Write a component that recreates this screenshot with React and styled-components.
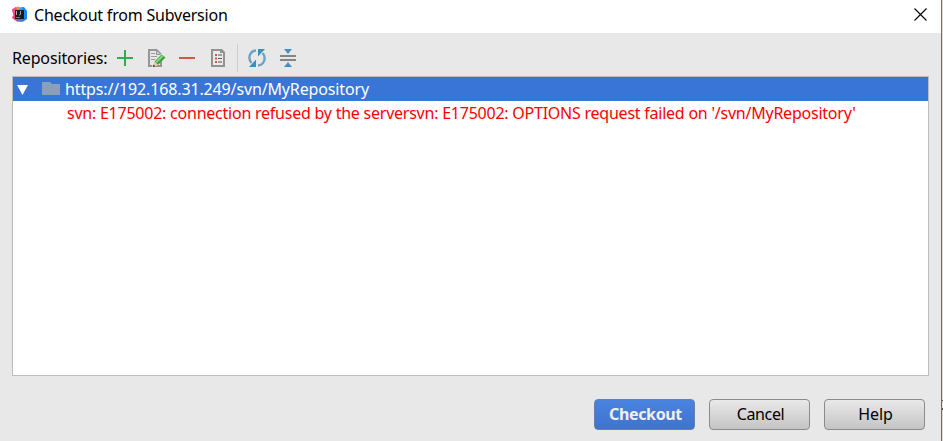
import React from "react";
import styled, { createGlobalStyle } from "styled-components";

const GlobalStyle = createGlobalStyle`
  * { box-sizing: border-box; }
  body {
    margin: 0;
    overflow: hidden;
    font-family: "Noto Sans", "Open Sans", sans-serif;
    font-size: 16px;
    color: #000;
  }
`;

const Screen = styled.div`
  display: flex;
  width: 943px;
  height: 441px;
`;

const Dialog = styled.main`
  display: flex;
  flex-direction: column;
  width: 942px;
  height: 441px;
  border-right: 1px solid #1883d7;
  background: #e8e8e8;
`;

const Backdrop = styled.aside`
  width: 1px;
  padding-top: 400px;
  background: #dcdcdc;
`;

const BackdropMark = styled.div`
  height: 10px;
  border: solid #555;
  border-width: 1px 0 2px;
`;

const TitleBar = styled.header`
  display: flex;
  align-items: center;
  height: 33px;
  padding: 0 14px 4px 11px;
  background: #fff;
`;

const Label = styled.span`
  display: block;
  flex: none;
  white-space: pre;
  line-height: 22px;
  letter-spacing: ${(p) => p.$track || 0}px;
`;

const Title = styled(Label)`
  margin-left: 6px;
  flex: 1;
`;

const CloseButton = styled.button`
  display: flex;
  padding: 0;
  border: 0;
  background: none;
`;

const Toolbar = styled.div`
  display: flex;
  align-items: center;
  height: 43px;
  padding: 7px 12px 0;
`;

const ToolbarLabel = styled(Label)`
  width: 103px;
`;

const ToolButton = styled.button`
  display: flex;
  flex: none;
  width: 20px;
  height: 20px;
  padding: 0;
  margin-right: ${(p) => p.$gap || 0}px;
  border: 0;
  background: none;
`;

const Separator = styled.div`
  width: 1px;
  height: 28px;
  margin-right: 9px;
  background: #cdcdcd;
`;

const Tree = styled.section`
  width: 917px;
  height: 300px;
  margin-left: 12px;
  border: 1px solid #bbbdbd;
  background: #fff;
`;

const TreeRow = styled.div`
  display: flex;
  align-items: center;
  height: 24px;
  padding-left: ${(p) => p.$indent}px;
  color: ${(p) => (p.$selected ? "#fff" : "#ff0000")};
  background: ${(p) => (p.$selected ? "#3875d7" : "transparent")};
`;

const RowLabel = styled(Label)`
  margin-left: ${(p) => p.$offset || 0}px;
`;

const Arrow = styled.svg`
  margin-right: 13px;
`;

const Footer = styled.footer`
  display: flex;
  justify-content: flex-end;
  gap: 14px;
  padding: 23px 16px 0 0;
`;

const Button = styled.button`
  display: flex;
  align-items: center;
  justify-content: center;
  width: 101px;
  height: 31px;
  padding: 0 0 1px 2px;
  border: 1px solid ${(p) => (p.$primary ? "#6b7fa3" : "#8b8b8b")};
  border-radius: 4px;
  font-family: inherit;
  font-size: 16px;
  font-weight: ${(p) => (p.$primary ? 700 : 400)};
  color: ${(p) => (p.$primary ? "#f0f0f0" : "#000")};
  background: ${(p) =>
    p.$primary
      ? "linear-gradient(#4a83e0, #3f73cd)"
      : "linear-gradient(#e9e9e9, #c4c4c4)"};
`;

const Icon = ({ children }) => (
  <svg width="20" height="20" viewBox="0 0 20 20" fill="none">
    {children}
  </svg>
);

const AppLogo = () => (
  <svg width="17" height="17" viewBox="0 0 17 17">
    <path d="M1 3.500 5 1l4 2v11l-3 1.500L1 12l1.500-3z" fill="#fb3f68" />
    <path d="M1 3.500 5 1l1 3-3.500 5z" fill="#ff4a9a" />
    <path d="m5 1 3-.5 2 3-4 1z" fill="#fb8937" />
    <path d="M9 1.500 13 1l3 4v8l-4.500 3-3.500-3z" fill="#168aea" />
    <path d="m9 1.500 3-.5-1 3H8z" fill="#2aa9f0" />
    <path d="m4 13 5-1 2 4-5-.5z" fill="#7468b8" />
    <rect x="4" y="4" width="9" height="9" fill="#1c1921" />
    <path d="M5.500 5v4M9.500 5v3q0 1-1.500 1" stroke="#aaa" strokeWidth="1" fill="none" />
    <path d="M5 11.500h4" stroke="#777" fill="none" />
  </svg>
);

const Page = () => (
  <>
    <path d="M2 1h9l5 5v13H2z" fill="#969696" />
    <path d="M4 3h6v4h4v10H4z" fill="#e6e6e6" />
    <path d="M11 3v3h3z" fill="#cfcfcf" />
  </>
);

export default function App() {
  return (
    <Screen>
      <GlobalStyle />
      <Dialog>
        <TitleBar>
          <AppLogo />
          <Title $track={-0.21}>Checkout from Subversion</Title>
          <CloseButton aria-label="Close">
            <svg width="13" height="13" viewBox="0 0 13 13">
              <path d="m.5.5 12 12M12.500.5l-12 12" stroke="#000" strokeWidth="1.100" />
            </svg>
          </CloseButton>
        </TitleBar>

        <Toolbar>
          <ToolbarLabel $track={-0.15}>Repositories:</ToolbarLabel>
          <ToolButton $gap={11} aria-label="Add">
            <Icon>
              <path d="M2 10h16M10 2v16" stroke="#27b04b" strokeWidth="2" />
            </Icon>
          </ToolButton>
          <ToolButton $gap={11} aria-label="Edit">
            <Icon>
              <Page />
              <path d="M5 5.500h4M5 8.500h6M5 11.500h4" stroke="#999" />
              <path d="m7 14 9-9 4 3-8 9-6 2z" fill="#e8e8e8" />
              <path d="m8.500 13.500 7-7 4 3-7.500 7.500z" fill="#3a9f3d" />
              <path d="m9.500 13.500 6.500-6.500 1.500 1.500-6.500 6.500z" fill="#85d67c" />
              <path d="m8.500 13.500 3.500 3.500-5 1.500z" fill="#efc592" />
              <path d="m7.500 16.500-.7 2.500 2.500-.7z" fill="#333" />
            </Icon>
          </ToolButton>
          <ToolButton $gap={12} aria-label="Remove">
            <Icon>
              <path d="M2 10h16" stroke="#d35742" strokeWidth="2" />
            </Icon>
          </ToolButton>
          <ToolButton $gap={8} aria-label="Details">
            <Icon>
              <path d="M2 1h11l3 3v15H2z" fill="#929292" />
              <path d="M4 3h7v2h3v12H4z" fill="#eaeaea" />
              <path d="M6 7h2M6 10.500h2M6 14h2" stroke="#dd5147" strokeWidth="2" />
              <path d="M9 7h4M9 10.500h4M9 14h4" stroke="#555" />
            </Icon>
          </ToolButton>
          <Separator />
          <ToolButton $gap={11} aria-label="Refresh">
            <Icon>
              <path d="M9 2.500C2.500 3 .5 10.500 4.500 15" stroke="#6aa3c4" strokeWidth="2.400" />
              <path d="M11 17.500c6.500-.5 8.500-8 4.500-12.500" stroke="#6aa3c4" strokeWidth="2.400" />
              <path d="M2 19h7v-7.500z" fill="#3e8fc0" />
              <path d="M18 1h-7v7.500z" fill="#3e8fc0" />
            </Icon>
          </ToolButton>
          <ToolButton aria-label="Collapse all">
            <Icon>
              <path d="M6 1h8l-4 5zM6 19h8l-4-5z" fill="#4190c2" />
              <path d="M2 8h16M2 12h16" stroke="#858585" strokeWidth="2" />
            </Icon>
          </ToolButton>
        </Toolbar>

        <Tree>
          <TreeRow $selected $indent={4}>
            <Arrow width="12" height="12" viewBox="0 0 12 12">
              <path d="M0 2h11L5.500 12z" fill="#fff" />
            </Arrow>
            <svg width="18" height="16" viewBox="0 0 18 16">
              <path d="M0 1h8l2 2h8v11H0z" fill="#8b9fb6" />
            </svg>
            <RowLabel $offset={5} $track={-0.14}>https://192.168.31.249/svn/MyRepository</RowLabel>
          </TreeRow>
          <TreeRow $indent={54}>
            <RowLabel $track={-0.235}>
              svn: E175002: connection refused by the serversvn: E175002: OPTIONS request failed on '/svn/MyRepository'
            </RowLabel>
          </TreeRow>
        </Tree>

        <Footer>
          <Button $primary><Label $track={-0.35}>Checkout</Label></Button>
          <Button><Label $track={-0.35}>Cancel</Label></Button>
          <Button><Label $track={-0.1}>Help</Label></Button>
        </Footer>
      </Dialog>
      <Backdrop><BackdropMark /></Backdrop>
    </Screen>
  );
}
